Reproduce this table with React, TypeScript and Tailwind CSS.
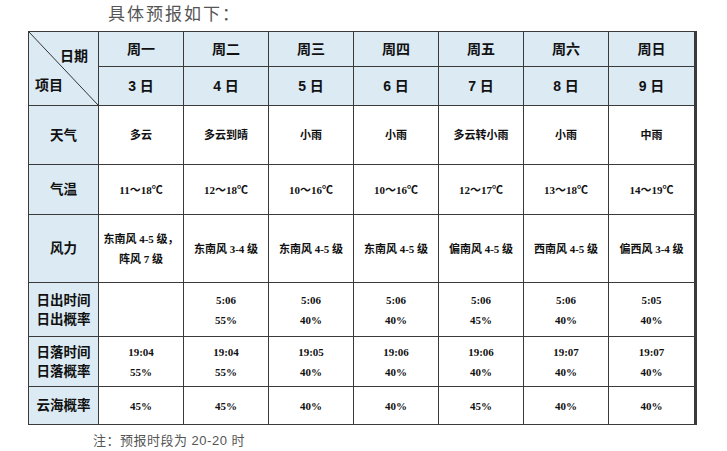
const days = [
  { w: "周一", d: "3 日" },
  { w: "周二", d: "4 日" },
  { w: "周三", d: "5 日" },
  { w: "周四", d: "6 日" },
  { w: "周五", d: "7 日" },
  { w: "周六", d: "8 日" },
  { w: "周日", d: "9 日" },
];

// each row: label lines, row height, cells (array of lines)
const rows: { label: string[]; cells: string[][] }[] = [
  {
    label: ["天气"],
    cells: [["多云"], ["多云到晴"], ["小雨"], ["小雨"], ["多云转小雨"], ["小雨"], ["中雨"]],
  },
  {
    label: ["气温"],
    cells: [["11～18℃"], ["12～18℃"], ["10～16℃"], ["10～16℃"], ["12～17℃"], ["13～18℃"], ["14～19℃"]],
  },
  {
    label: ["风力"],
    cells: [
      ["东南风 4-5 级，", "阵风 7 级"],
      ["东南风 3-4 级"],
      ["东南风 4-5 级"],
      ["东南风 4-5 级"],
      ["偏南风 4-5 级"],
      ["西南风 4-5 级"],
      ["偏西风 3-4 级"],
    ],
  },
  {
    label: ["日出时间", "日出概率"],
    cells: [[], ["5:06", "55%"], ["5:06", "40%"], ["5:06", "40%"], ["5:06", "45%"], ["5:06", "40%"], ["5:05", "40%"]],
  },
  {
    label: ["日落时间", "日落概率"],
    cells: [
      ["19:04", "55%"],
      ["19:04", "55%"],
      ["19:05", "40%"],
      ["19:06", "40%"],
      ["19:06", "40%"],
      ["19:07", "40%"],
      ["19:07", "40%"],
    ],
  },
  {
    label: ["云海概率"],
    cells: [["45%"], ["45%"], ["40%"], ["40%"], ["45%"], ["40%"], ["40%"]],
  },
];

export default function App() {
  return (
    <div className="w-[727px] h-[451px] bg-white overflow-hidden font-['Liberation_Sans','Noto_Sans_CJK_SC',sans-serif]">
      {/* title */}
      <div className="h-[31px] pl-[108px] pt-[2px] text-[17px] leading-[26px] tracking-[2px] text-[#555]">
        具体预报如下：
      </div>

      {/* table */}
      <div className="ml-[28px] w-[667px] grid grid-cols-[69px_repeat(6,84px)_85px] grid-rows-[34px_38px_58px_49px_67px_53px_49px_37px] gap-px bg-[#3a3a3a] border border-[#3a3a3a] box-content -mr-px">
        {/* corner cell */}
        <div className="row-span-2 relative bg-[#dbeaf3] flex flex-col justify-between pt-[14px] pb-[10px] text-[14px] leading-[20px] font-bold text-[#111]">
          <svg className="absolute inset-0 w-full h-full" preserveAspectRatio="none" viewBox="0 0 100 100">
            <line x1="0" y1="0" x2="100" y2="100" stroke="#333" strokeWidth="1" vectorEffect="non-scaling-stroke" />
          </svg>
          <span className="self-end pr-[10px] relative">日期</span>
          <span className="pl-[6px] relative">项目</span>
        </div>
        {days.map((d) => (
          <div key={d.w} className="bg-[#dbeaf3] flex items-center justify-center text-[14px] font-bold text-[#111]">
            {d.w}
          </div>
        ))}
        {days.map((d) => (
          <div key={d.d} className="bg-[#dbeaf3] flex items-center justify-center text-[14px] font-bold text-[#111]">
            {d.d}
          </div>
        ))}

        {rows.map((r) => (
          <Row key={r.label[0]} label={r.label} cells={r.cells} />
        ))}
      </div>

      {/* note */}
      <div className="mt-[6px] pl-[93px] text-[13px] leading-[20px] tracking-[0.5px] text-[#555]">
        注：预报时段为 20-20 时
      </div>
    </div>
  );
}

function Row({ label, cells }: { label: string[]; cells: string[][] }) {
  return (
    <>
      <div className="bg-[#dbeaf3] flex flex-col items-center justify-center text-[13.5px] leading-[19px] font-bold text-[#111]">
        {label.map((l) => (
          <span key={l}>{l}</span>
        ))}
      </div>
      {cells.map((c, i) => (
        <div
          key={i}
          className="bg-white flex flex-col items-center justify-center text-[11px] leading-[20px] font-bold text-[#111] font-['Liberation_Serif','Noto_Sans_CJK_SC',serif]"
        >
          {c.map((l, j) => (
            <span key={j}>{l}</span>
          ))}
        </div>
      ))}
    </>
  );
}
